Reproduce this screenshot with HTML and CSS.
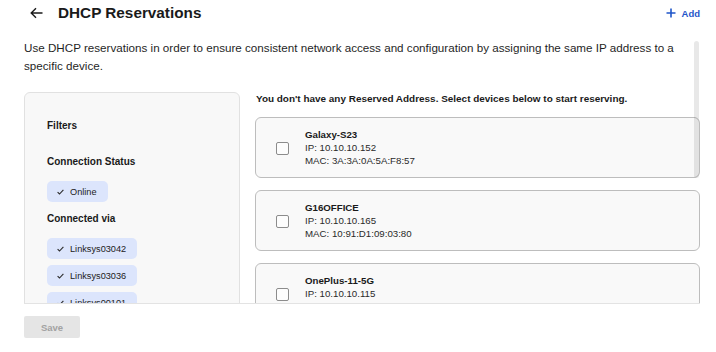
FILE: index.html
```html
<!DOCTYPE html>
<html lang="en">
<head>
<meta charset="utf-8">
<title>DHCP Reservations</title>
<link rel="stylesheet" href="styles.css">
</head>
<body>
<div class="page">
  <header class="topbar">
    <div class="title-group">
      <svg class="back" width="13" height="12" viewBox="0 0 13 12" aria-hidden="true">
        <path d="M12.5 6H1.2M6 1.2L1.2 6L6 10.8" fill="none" stroke="#1a1a1a" stroke-width="1.4"/>
      </svg>
      <h1 class="title">DHCP Reservations</h1>
    </div>
    <button class="add">
      <svg width="10" height="10" viewBox="0 0 10 10" aria-hidden="true">
        <path d="M5 0.5V9.5M0.5 5H9.5" stroke="#1f56c9" stroke-width="1.6"/>
      </svg>
      <span>Add</span>
    </button>
  </header>

  <div class="scroll">
    <p class="desc">Use DHCP reservations in order to ensure consistent network access and configuration by assigning the same IP address to a specific device.</p>

    <div class="columns">
      <aside class="filters">
        <div class="filters-title">Filters</div>
        <div class="group-title">Connection Status</div>
        <div class="chips">
          <span class="chip"><svg class="check" width="7" height="6" viewBox="0 0 7 6"><path d="M0.6 3.1L2.5 5L6.4 0.8" fill="none" stroke="#2a2a2a" stroke-width="1.1"/></svg>Online</span>
        </div>
        <div class="group-title">Connected via</div>
        <div class="chips">
          <span class="chip"><svg class="check" width="7" height="6" viewBox="0 0 7 6"><path d="M0.6 3.1L2.5 5L6.4 0.8" fill="none" stroke="#2a2a2a" stroke-width="1.1"/></svg>Linksys03042</span>
          <span class="chip"><svg class="check" width="7" height="6" viewBox="0 0 7 6"><path d="M0.6 3.1L2.5 5L6.4 0.8" fill="none" stroke="#2a2a2a" stroke-width="1.1"/></svg>Linksys03036</span>
          <span class="chip"><svg class="check" width="7" height="6" viewBox="0 0 7 6"><path d="M0.6 3.1L2.5 5L6.4 0.8" fill="none" stroke="#2a2a2a" stroke-width="1.1"/></svg>Linksys00101</span>
        </div>
      </aside>

      <section class="devices">
        <div class="devices-title">You don't have any Reserved Address. Select devices below to start reserving.</div>
        <div class="card">
          <span class="box"></span>
          <div class="info">
            <div class="name">Galaxy-S23</div>
            <div>IP: 10.10.10.152</div>
            <div>MAC: 3A:3A:0A:5A:F8:57</div>
          </div>
        </div>
        <div class="card">
          <span class="box"></span>
          <div class="info">
            <div class="name">G16OFFICE</div>
            <div>IP: 10.10.10.165</div>
            <div>MAC: 10:91:D1:09:03:80</div>
          </div>
        </div>
        <div class="card">
          <span class="box"></span>
          <div class="info">
            <div class="name">OnePlus-11-5G</div>
            <div>IP: 10.10.10.115</div>
            <div>MAC: 02:6D:B2:03:F0:27</div>
          </div>
        </div>
      </section>
    </div>
    <div class="thumb"></div>
  </div>

  <button class="save">Save</button>
</div>
</body>
</html>
```

FILE: styles.css
```css
* { box-sizing: border-box; }

html, body {
  margin: 0;
  padding: 0;
  background: #ffffff;
}

body {
  width: 716px;
  height: 352px;
  overflow: hidden;
  font-family: "Liberation Sans", Arial, sans-serif;
  color: #1c1c1c;
}

.page {
  padding: 0 16px 0 24px;
}

.topbar {
  height: 26px;
  display: flex;
  align-items: center;
  justify-content: space-between;
}

.title-group {
  display: flex;
  align-items: center;
  gap: 15px;
  padding-left: 6px;
}

.back { display: block; }

.title {
  margin: 0;
  font-size: 15.3px;
  font-weight: 700;
  line-height: 20px;
  color: #1a1a1a;
}

.add {
  display: flex;
  align-items: center;
  gap: 6px;
  border: 0;
  background: none;
  padding: 0;
  font-family: inherit;
  font-size: 9.5px;
  font-weight: 700;
  color: #1f56c9;
}

.add svg { display: block; }

.scroll {
  position: relative;
  margin-top: 13px;
  height: 265px;
  overflow: hidden;
  border-bottom: 1px solid #e3e3e3;
}

.desc {
  margin: 0;
  font-size: 11.65px;
  line-height: 18px;
  color: #1f1f1f;
}

.columns {
  margin-top: 17px;
  display: grid;
  grid-template-columns: 216px 445px;
  column-gap: 15px;
  align-items: start;
}

.filters {
  background: #f8f8f8;
  border: 1px solid #e1e1e1;
  border-radius: 6px;
  padding: 26px 22px 30px;
  min-height: 260px;
}

.filters-title,
.group-title {
  font-size: 10px;
  font-weight: 700;
  line-height: 14px;
  color: #1a1a1a;
}

.group-title { margin-top: 22px; }
.chips + .group-title { margin-top: 10px; }

.chips {
  margin-top: 12px;
  display: flex;
  flex-direction: column;
  align-items: flex-start;
  gap: 6px;
}

.chip {
  display: inline-flex;
  align-items: center;
  gap: 6px;
  height: 21px;
  padding: 0 11px 0 10px;
  background: #dce5fc;
  border-radius: 5px;
  font-size: 9.2px;
  color: #222;
}

.check { display: block; }

.devices-title {
  font-size: 9.95px;
  font-weight: 700;
  line-height: 14px;
  color: #1a1a1a;
  margin: 0 0 11px 1px;
}

.card {
  display: flex;
  align-items: center;
  gap: 16px;
  padding: 10px 20px;
  margin-bottom: 12px;
  background: #f9f9f9;
  border: 1px solid #bdbdbd;
  border-radius: 6px;
}

.box {
  width: 13px;
  height: 13px;
  flex: none;
  border: 1.2px solid #8c8c8c;
  border-radius: 2px;
  background: #fdfdfd;
  margin-top: 1px;
}

.info {
  font-size: 9.7px;
  line-height: 13px;
  color: #2a2a2a;
}

.name {
  font-weight: 700;
  color: #1a1a1a;
}

.thumb {
  position: absolute;
  right: 1px;
  top: 2px;
  width: 5px;
  height: 137px;
  border-radius: 3px;
  background: rgba(0, 0, 0, 0.09);
}

.save {
  display: block;
  margin-top: 12px;
  width: 56px;
  height: 22px;
  border: 0;
  border-radius: 2px;
  background: #e5e5e5;
  color: #a2a2a2;
  font-family: inherit;
  font-size: 9.5px;
  font-weight: 700;
}
```
